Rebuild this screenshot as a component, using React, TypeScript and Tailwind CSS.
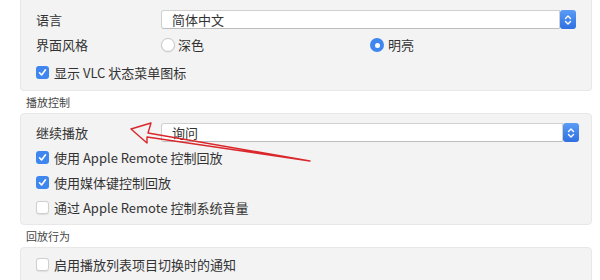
import React from "react";

const font = { fontFamily: '"Noto Sans CJK SC", "Noto Sans", sans-serif' };

const Stepper = () => (
  <div className="w-[16px] h-[19px] rounded-[3px] bg-gradient-to-b from-[#5a9cf5] to-[#2f6fe0] flex items-center justify-center">
    <svg width="8" height="12" viewBox="0 0 8 12" fill="none" stroke="white" strokeWidth="1.4" strokeLinecap="round" strokeLinejoin="round">
      <path d="M1.5 4.5 L4 2 L6.5 4.5" />
      <path d="M1.5 7.5 L4 10 L6.5 7.5" />
    </svg>
  </div>
);

const Select = ({ value, width }: { value: string; width: string }) => (
  <div className={`flex items-center h-[19px] ${width}`}>
    <div className="flex-1 h-full bg-white border border-[#d0d0d0] border-b-[#bdbdbd] rounded-l-[3px] flex items-center pl-[10px] text-[13px] text-[#333] leading-none">
      {value}
    </div>
    <Stepper />
  </div>
);

const Checkbox = ({ checked }: { checked?: boolean }) =>
  checked ? (
    <div className="w-[13px] h-[13px] rounded-[3px] bg-[#3f86ef] flex items-center justify-center">
      <svg width="9" height="9" viewBox="0 0 9 9" fill="none" stroke="white" strokeWidth="1.6" strokeLinecap="round" strokeLinejoin="round">
        <path d="M1.5 4.8 L3.6 7 L7.5 1.8" />
      </svg>
    </div>
  ) : (
    <div className="w-[13px] h-[13px] rounded-[3px] bg-white border border-[#cfcfcf] shadow-[0_0.5px_1px_rgba(0,0,0,0.08)]" />
  );

const CheckRow = ({ label, checked }: { label: string; checked?: boolean }) => (
  <div className="flex items-center gap-[5px] h-[25px] text-[13px] text-[#333]">
    <Checkbox checked={checked} />
    <span>{label}</span>
  </div>
);

export default function App() {
  return (
    <div className="relative w-[600px] h-[280px] overflow-hidden bg-white" style={font}>
      {/* 通用 */}
      <div className="ml-[20px] w-[572px] h-[91px] bg-[#f3f3f3] border-b border-x border-[#e8e8e8] rounded-b-[4px] pl-[15px] pt-[9px]">
        <div className="flex items-center h-[21px]">
          <span className="w-[125px] text-[13px] text-[#333]">语言</span>
          <Select value="简体中文" width="w-[415px]" />
        </div>
        <div className="flex items-center h-[30px]">
          <span className="w-[125px] text-[13px] text-[#333]">界面风格</span>
          <div className="flex items-center w-[209px] gap-[3px] text-[13px] text-[#333]">
            <div className="w-[14px] h-[14px] rounded-full bg-white border border-[#c8c8c8] shadow-[0_0.5px_1px_rgba(0,0,0,0.1)]" />
            <span>深色</span>
          </div>
          <div className="flex items-center gap-[4px] text-[13px] text-[#333]">
            <div className="w-[14px] h-[14px] rounded-full bg-[#3f86ef] flex items-center justify-center">
              <div className="w-[5px] h-[5px] rounded-full bg-white" />
            </div>
            <span>明亮</span>
          </div>
        </div>
        <CheckRow label="显示 VLC 状态菜单图标" checked />
      </div>

      {/* 播放控制 */}
      <div className="ml-[26px] h-[22px] flex items-end pb-[3px] text-[11px] text-[#444]">播放控制</div>
      <div className="ml-[20px] w-[572px] h-[112px] bg-[#f3f3f3] border border-[#e8e8e8] rounded-[4px] pl-[15px] pt-[8px]">
        <div className="flex items-center h-[21px]">
          <span className="w-[125px] text-[13px] text-[#333]">继续播放</span>
          <Select value="询问" width="w-[418px]" />
        </div>
        <div className="pt-[2px]">
          <CheckRow label="使用 Apple Remote 控制回放" checked />
          <CheckRow label="使用媒体键控制回放" checked />
          <CheckRow label="通过 Apple Remote 控制系统音量" />
        </div>
      </div>

      {/* 回放行为 */}
      <div className="ml-[26px] h-[22px] flex items-end pb-[3px] text-[11px] text-[#444]">回放行为</div>
      <div className="ml-[20px] w-[572px] h-[60px] bg-[#f3f3f3] border border-[#e8e8e8] rounded-[4px] pl-[15px] pt-[4px]">
        <CheckRow label="启用播放列表项目切换时的通知" />
        <div className="flex items-center h-[21px] pt-[6px]">
          <span className="w-[125px]" />
          <Select value="" width="w-[415px]" />
        </div>
      </div>

      {/* red annotation arrow */}
      <svg className="absolute left-0 top-0 pointer-events-none" width="600" height="280">
        <polygon
          points="310,161 148,133 151,123 131,129 147,143 147,137"
          fill="none"
          stroke="#d9272b"
          strokeWidth="1.4"
          strokeLinejoin="round"
        />
      </svg>
    </div>
  );
}
